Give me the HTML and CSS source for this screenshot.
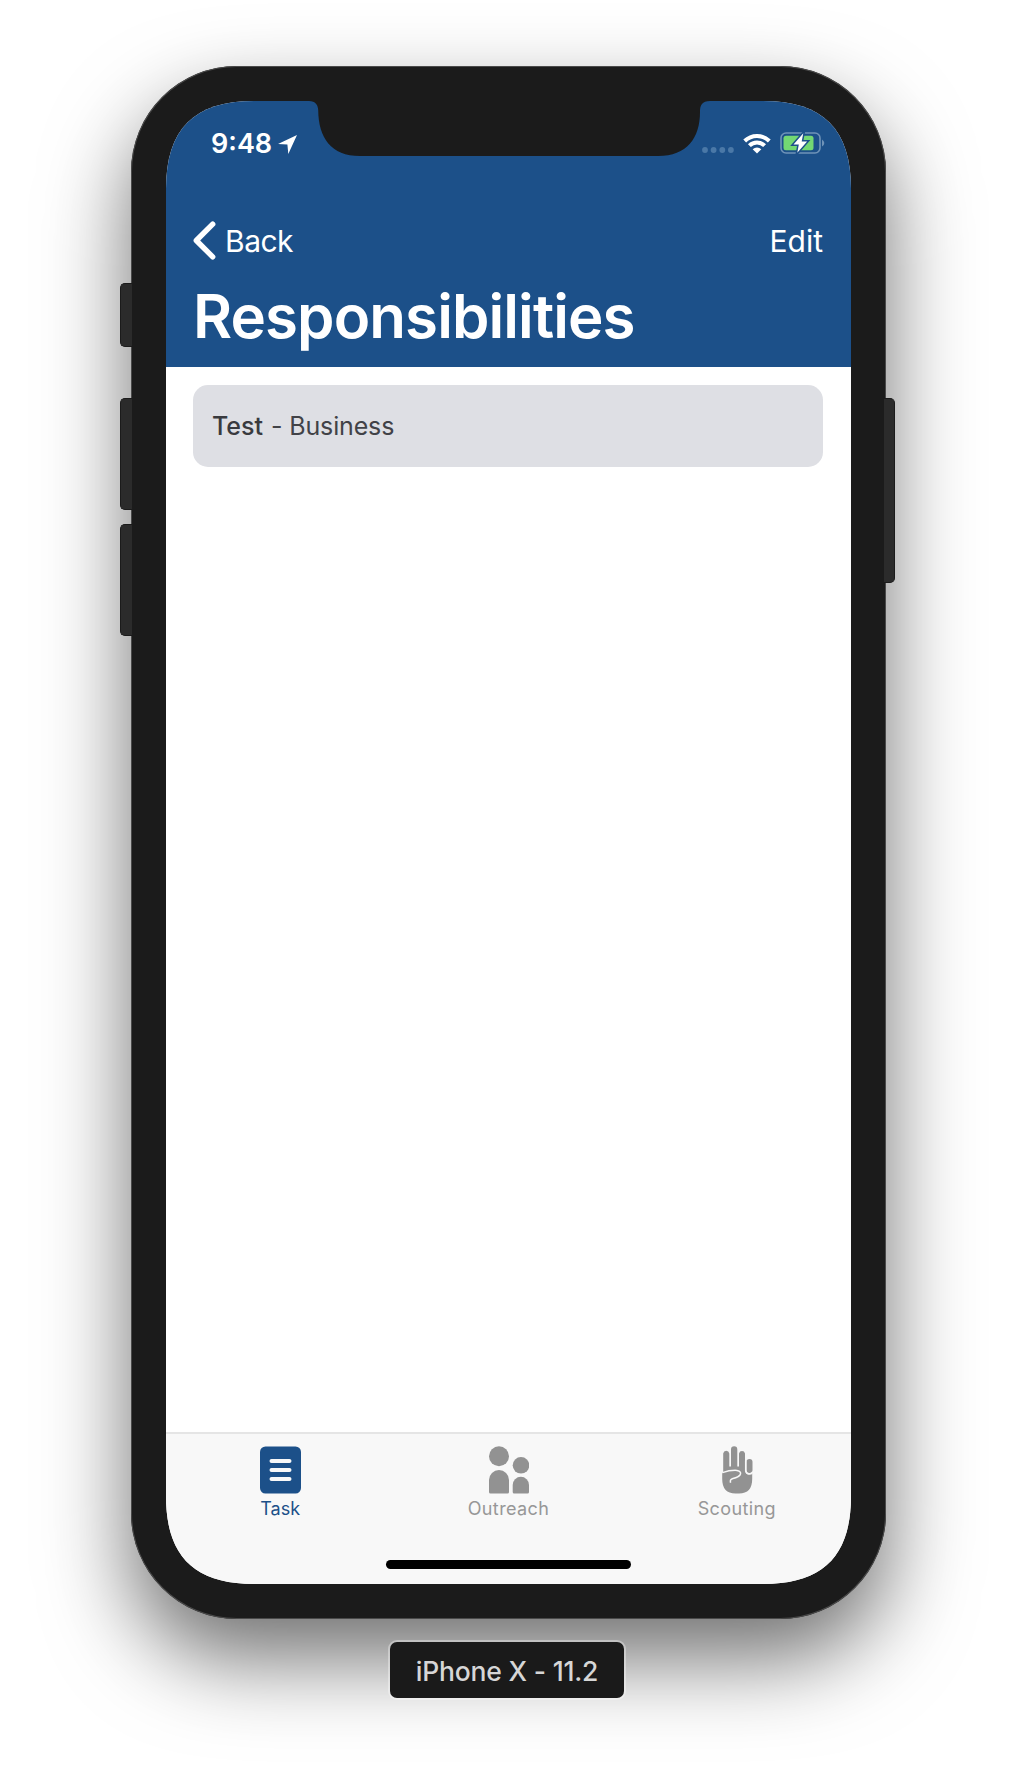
FILE: index.html
```html
<!DOCTYPE html>
<html lang="en">
<head>
<meta charset="utf-8">
<title>Responsibilities</title>
<link rel="stylesheet" href="styles.css">
</head>
<body>
<div class="phone">
  <span class="button button-mute"></span>
  <span class="button button-up"></span>
  <span class="button button-down"></span>
  <span class="button button-side"></span>
  <main class="screen">
    <svg class="notch" viewBox="300 101 420 60" width="420" height="60"><path fill="#1b1b1b" d="M300 100V101H309C315.500 101 318 105 318.200 110C318.500 138 331 156 360 156H658C687 156 700 138 700 112C700 105 702 101 710 101H720V100Z"/></svg>
    <header class="header">
      <div class="status">
        <div class="status-left">
          <span class="time">9:48</span>
          <svg class="arrow" viewBox="0 0 19 19" width="19" height="19"><path fill="#fff" d="M19 0L10.300 19L9.400 9.600L0 8.900Z"/></svg>
        </div>
        <div class="status-right">
          <svg class="dots" viewBox="0 0 32 6" width="32" height="6" fill="#4a78a7"><circle cx="3" cy="3" r="2.900"/><circle cx="11.600" cy="3" r="2.900"/><circle cx="20.300" cy="3" r="2.900"/><circle cx="28.900" cy="3" r="2.900"/></svg>
          <svg class="wifi" viewBox="0 0 28 21" width="28" height="21"><g fill="none" stroke="#fff" stroke-width="4"><path d="M1.700 8A17.400 17.400 0 0 1 26.300 8"/><path d="M6.400 12.700A10.700 10.700 0 0 1 21.600 12.700"/></g><path fill="#fff" d="M14 20.500L9.700 16.200A6 6 0 0 1 18.300 16.200Z"/></svg>
          <svg class="battery" viewBox="0 0 45 22" width="45" height="22"><rect x="1" y="1" width="39" height="20" rx="5" fill="none" stroke="#6f93b8" stroke-width="1.600"/><path fill="#6f93b8" d="M42 7.500Q44.300 9 44.300 11Q44.300 13 42 14.500Z"/><rect x="3.500" y="3.700" width="30" height="14.600" rx="2.500" fill="#73d873"/><path fill="#fff" stroke="#1c5089" stroke-width="3" stroke-linejoin="miter" paint-order="stroke" d="M23.300 1.300L13.500 12.500H18.800L17.300 20.700L27.100 9.500H21.700Z"/></svg>
        </div>
      </div>
      <nav class="nav">
        <span class="back"><svg viewBox="0 0 23 39" width="23" height="39"><path d="M19.700 3.200L3.300 19.500L19.700 35.800" fill="none" stroke="#fff" stroke-width="5.400" stroke-linecap="round" stroke-linejoin="round"/></svg><span class="back-text">Back</span></span>
        <span class="edit">Edit</span>
      </nav>
      <h1 class="title">Responsibilities</h1>
    </header>
    <section class="content">
      <div class="card"><strong class="name">Test</strong><span class="kind">- Business</span></div>
    </section>
    <footer class="footer">
      <div class="tabs">
        <div class="tab tab-active">
          <svg viewBox="0 0 41 48" width="41" height="48"><rect y=".5" width="41" height="47" rx="5.500" fill="#1c5089"/><path d="M11.500 15H29.500M11.500 24H29.500M11.500 33H29.500" stroke="#f8f8f8" stroke-width="4" stroke-linecap="round"/></svg>
          <span class="tab-label">Task</span>
        </div>
        <div class="tab">
          <svg class="people" viewBox="0 0 40 48" width="40" height="48" fill="#929292"><circle cx="10" cy="10.300" r="10"/><circle cx="32" cy="19.300" r="8.300"/><path d="M0 34A10 10 0 0 1 20 34V46Q20 47.500 18.500 47.500H1.500Q0 47.500 0 46Z"/><path d="M23.700 39A8.150 8.150 0 0 1 40 39V46Q40 47.500 38.500 47.500H25.200Q23.700 47.500 23.700 46Z"/></svg>
          <span class="tab-label">Outreach</span>
        </div>
        <div class="tab">
          <svg class="hand" viewBox="0 0 31 48" width="31" height="48"><path fill="#929292" d="M1.200 7.400A3.100 3.100 0 0 1 7.300 7.400V20.500H9V3.500A3.100 3.100 0 0 1 15.300 3.500V20.500H17V7.400A3.100 3.100 0 0 1 23 7.400V25L24.500 27.800Q27.500 30 30.200 26V33Q30.200 47.500 17 47.500H13.500Q.2 47.500 .2 33V27.500L1.200 26Z"/><rect x="24.500" y="13" width="6" height="14" rx="3" fill="#929292"/><path d="M.5 26.600Q8 24 15 24.400Q20 25.400 18 29Q16.800 31 11 32.500Q7.600 33.300 8.600 36.700M23.700 15V24.800Q24.300 28 27.500 28Q29.500 28 30.700 26" fill="none" stroke="#f8f8f8" stroke-width="1.500"/></svg>
          <span class="tab-label">Scouting</span>
        </div>
      </div>
      <div class="home"></div>
    </footer>
  </main>
</div>
<div class="device"><span class="device-text">iPhone X - 11.2</span></div>
</body>
</html>
```
FILE: styles.css
```css
* { box-sizing: border-box; }
body {
  margin: 0;
  height: 1782px;
  padding: 66px 0 0 131px;
  background: #fff;
  font-family: Inter, "Liberation Sans", sans-serif;
  overflow: hidden;
}
svg { display: block; flex: none; }
.phone {
  position: relative;
  width: 755px;
  height: 1553px;
  padding: 35px;
  border-radius: 106px;
  background: #1b1b1b;
  box-shadow: inset 0 0 0 1px #4a4a4a, 0 40px 86px rgba(0, 0, 0, .56);
}
.button {
  position: absolute;
  left: -11px;
  width: 12px;
  border: 1px solid #1b1b1b;
  border-right: 0;
  border-radius: 5px 0 0 5px;
  background: #2b2b2b;
}
.button-mute { top: 217px; height: 64px; }
.button-up { top: 332px; height: 112px; }
.button-down { top: 458px; height: 112px; }
.button-side {
  left: auto;
  right: -9px;
  top: 332px;
  width: 11px;
  height: 185px;
  border: 1px solid #1b1b1b;
  border-left: 0;
  border-radius: 0 5px 5px 0;
}
.screen {
  position: relative;
  display: flex;
  flex-direction: column;
  width: 685px;
  height: 1483px;
  background: #fff;
  clip-path: path("M0 88C0 28 28 0 88 0H597C657 0 685 28 685 88V1395C685 1455 657 1483 597 1483H88C28 1483 0 1455 0 1395Z");
}
.notch { position: absolute; left: 134px; top: 0; }
.header { height: 266px; background: #1c5089; color: #fff; }
.status { display: flex; justify-content: space-between; height: 84px; padding: 0 26px 0 45px; }
.status-left, .status-right { display: flex; align-items: center; }
.time { width: 67px; padding-top: 1px; font-size: 27px; font-weight: 600; line-height: 32px; white-space: nowrap; }
.arrow { margin-top: 3px; }
.dots { margin: 14px 9px 0 0; }
.wifi { margin-right: 9px; }
.nav { display: flex; justify-content: space-between; align-items: center; height: 60px; margin-top: 25px; padding: 0 28px 0 27px; font-size: 30px; line-height: 36px; }
.back { display: flex; align-items: center; gap: 9px; letter-spacing: -.5px; }
.back-text { padding-top: 1px; }
.edit { padding-top: 2px; }
.title { margin: 0; padding: 1px 0 0 27px; font-size: 60px; line-height: 90px; font-weight: 600; letter-spacing: -.900px; }
.content { flex: 1; padding: 18px 28px 0 27px; }
.card { display: flex; align-items: center; gap: 8px; height: 82px; padding-left: 19px; border-radius: 15px; background: #dedfe4; color: #414247; font-size: 25px; line-height: 30px; white-space: nowrap; }
.name { font-weight: 500; color: #393a3e; }
.kind { letter-spacing: -.150px; }
.footer { height: 152px; border-top: 2px solid #e5e5e5; background: #f8f8f8; }
.tabs { display: flex; padding-top: 12px; }
.tab { flex: 1; display: flex; flex-direction: column; align-items: center; gap: 3px; color: #979797; font-size: 18px; line-height: 24px; letter-spacing: .400px; }
.tab-active { color: #1c5089; letter-spacing: 0; }
.people { margin-left: 1px; }
.hand { margin-left: 2px; }
.home { width: 245px; height: 9px; margin: 39px 0 0 220px; border-radius: 5px; background: #000; }
.device { display: flex; justify-content: center; align-items: center; position: relative; width: 234px; height: 56px; margin: 23px 0 0 259px; padding-top: 2px; border-radius: 7px; background: #1a1a1a; box-shadow: 0 0 0 2px rgba(255, 255, 255, .35); color: #d6d6d6; font-size: 26.500px; font-weight: 500; line-height: 54px; letter-spacing: -.200px; white-space: nowrap; }
```
